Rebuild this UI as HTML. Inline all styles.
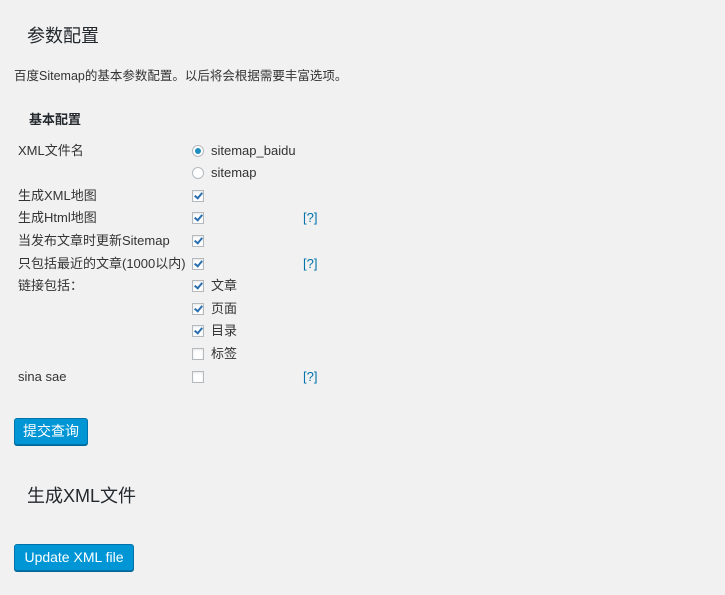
<!DOCTYPE html><html><head><meta charset="utf-8"><style>
body{margin:0;width:725px;height:595px;background:#f1f1f1;font-family:"Liberation Sans","Noto Sans CJK SC",sans-serif;font-size:13px;color:#333;position:relative;overflow:hidden}
.a{position:absolute;white-space:nowrap;line-height:16px}
h2{position:absolute;margin:0;font-weight:400;font-size:18px;color:#23282d;line-height:24px}
.cb{position:absolute;width:10px;height:10px;border:1px solid #b4b9be;background:#fff;box-shadow:inset 0 1px 2px rgba(0,0,0,.1)}
.cb.c:after{content:"";position:absolute;left:3px;top:0px;width:3px;height:6px;border:solid #2a6fb0;border-width:0 2px 2px 0;transform:rotate(40deg)}
.rd{position:absolute;width:10px;height:10px;border:1px solid #b4b9be;border-radius:50%;background:#fff}
.rd.c:after{content:"";position:absolute;left:2px;top:2px;width:6px;height:6px;border-radius:50%;background:#1e8cbe}
.q{position:absolute;color:#0073aa;line-height:16px}
.btn{position:absolute;background:#0096d6;border:1px solid #0073aa;border-radius:3px;color:#fff;box-shadow:0 1px 0 #006799;text-align:center;line-height:25px;font-size:14px}
</style></head><body>
<h2 style="left:27px;top:24px">参数配置</h2>
<div class="a" style="left:14px;top:68px;font-size:12.5px">百度Sitemap的基本参数配置。以后将会根据需要丰富选项。</div>
<div class="a" style="left:29px;top:112px;font-weight:bold;color:#23282d">基本配置</div>
<div class="a" style="left:18px;top:143px">XML文件名</div>
<div class="rd c" style="left:192px;top:145px"></div><div class="a" style="left:211px;top:143px">sitemap_baidu</div>
<div class="rd" style="left:192px;top:167px"></div><div class="a" style="left:211px;top:165px">sitemap</div>
<div class="a" style="left:18px;top:188px">生成XML地图</div><div class="cb c" style="left:192px;top:190px"></div>
<div class="a" style="left:18px;top:210px">生成Html地图</div><div class="cb c" style="left:192px;top:212px"></div><div class="q" style="left:303px;top:210px">[?]</div>
<div class="a" style="left:18px;top:233px">当发布文章时更新Sitemap</div><div class="cb c" style="left:192px;top:235px"></div>
<div class="a" style="left:18px;top:256px">只包括最近的文章(1000以内)</div><div class="cb c" style="left:192px;top:258px"></div><div class="q" style="left:303px;top:256px">[?]</div>
<div class="a" style="left:18px;top:278px">链接包括：</div><div class="cb c" style="left:192px;top:280px"></div><div class="a" style="left:211px;top:278px">文章</div>
<div class="cb c" style="left:192px;top:303px"></div><div class="a" style="left:211px;top:301px">页面</div>
<div class="cb c" style="left:192px;top:325px"></div><div class="a" style="left:211px;top:323px">目录</div>
<div class="cb" style="left:192px;top:348px"></div><div class="a" style="left:211px;top:346px">标签</div>
<div class="a" style="left:18px;top:369px">sina sae</div><div class="cb" style="left:192px;top:371px"></div><div class="q" style="left:303px;top:369px">[?]</div>
<div class="btn" style="left:14px;top:418px;width:72px;height:25px">提交查询</div>
<h2 style="left:27px;top:484px">生成XML文件</h2>
<div class="btn" style="left:14px;top:544px;width:118px;height:25px">Update XML file</div>
</body></html>
